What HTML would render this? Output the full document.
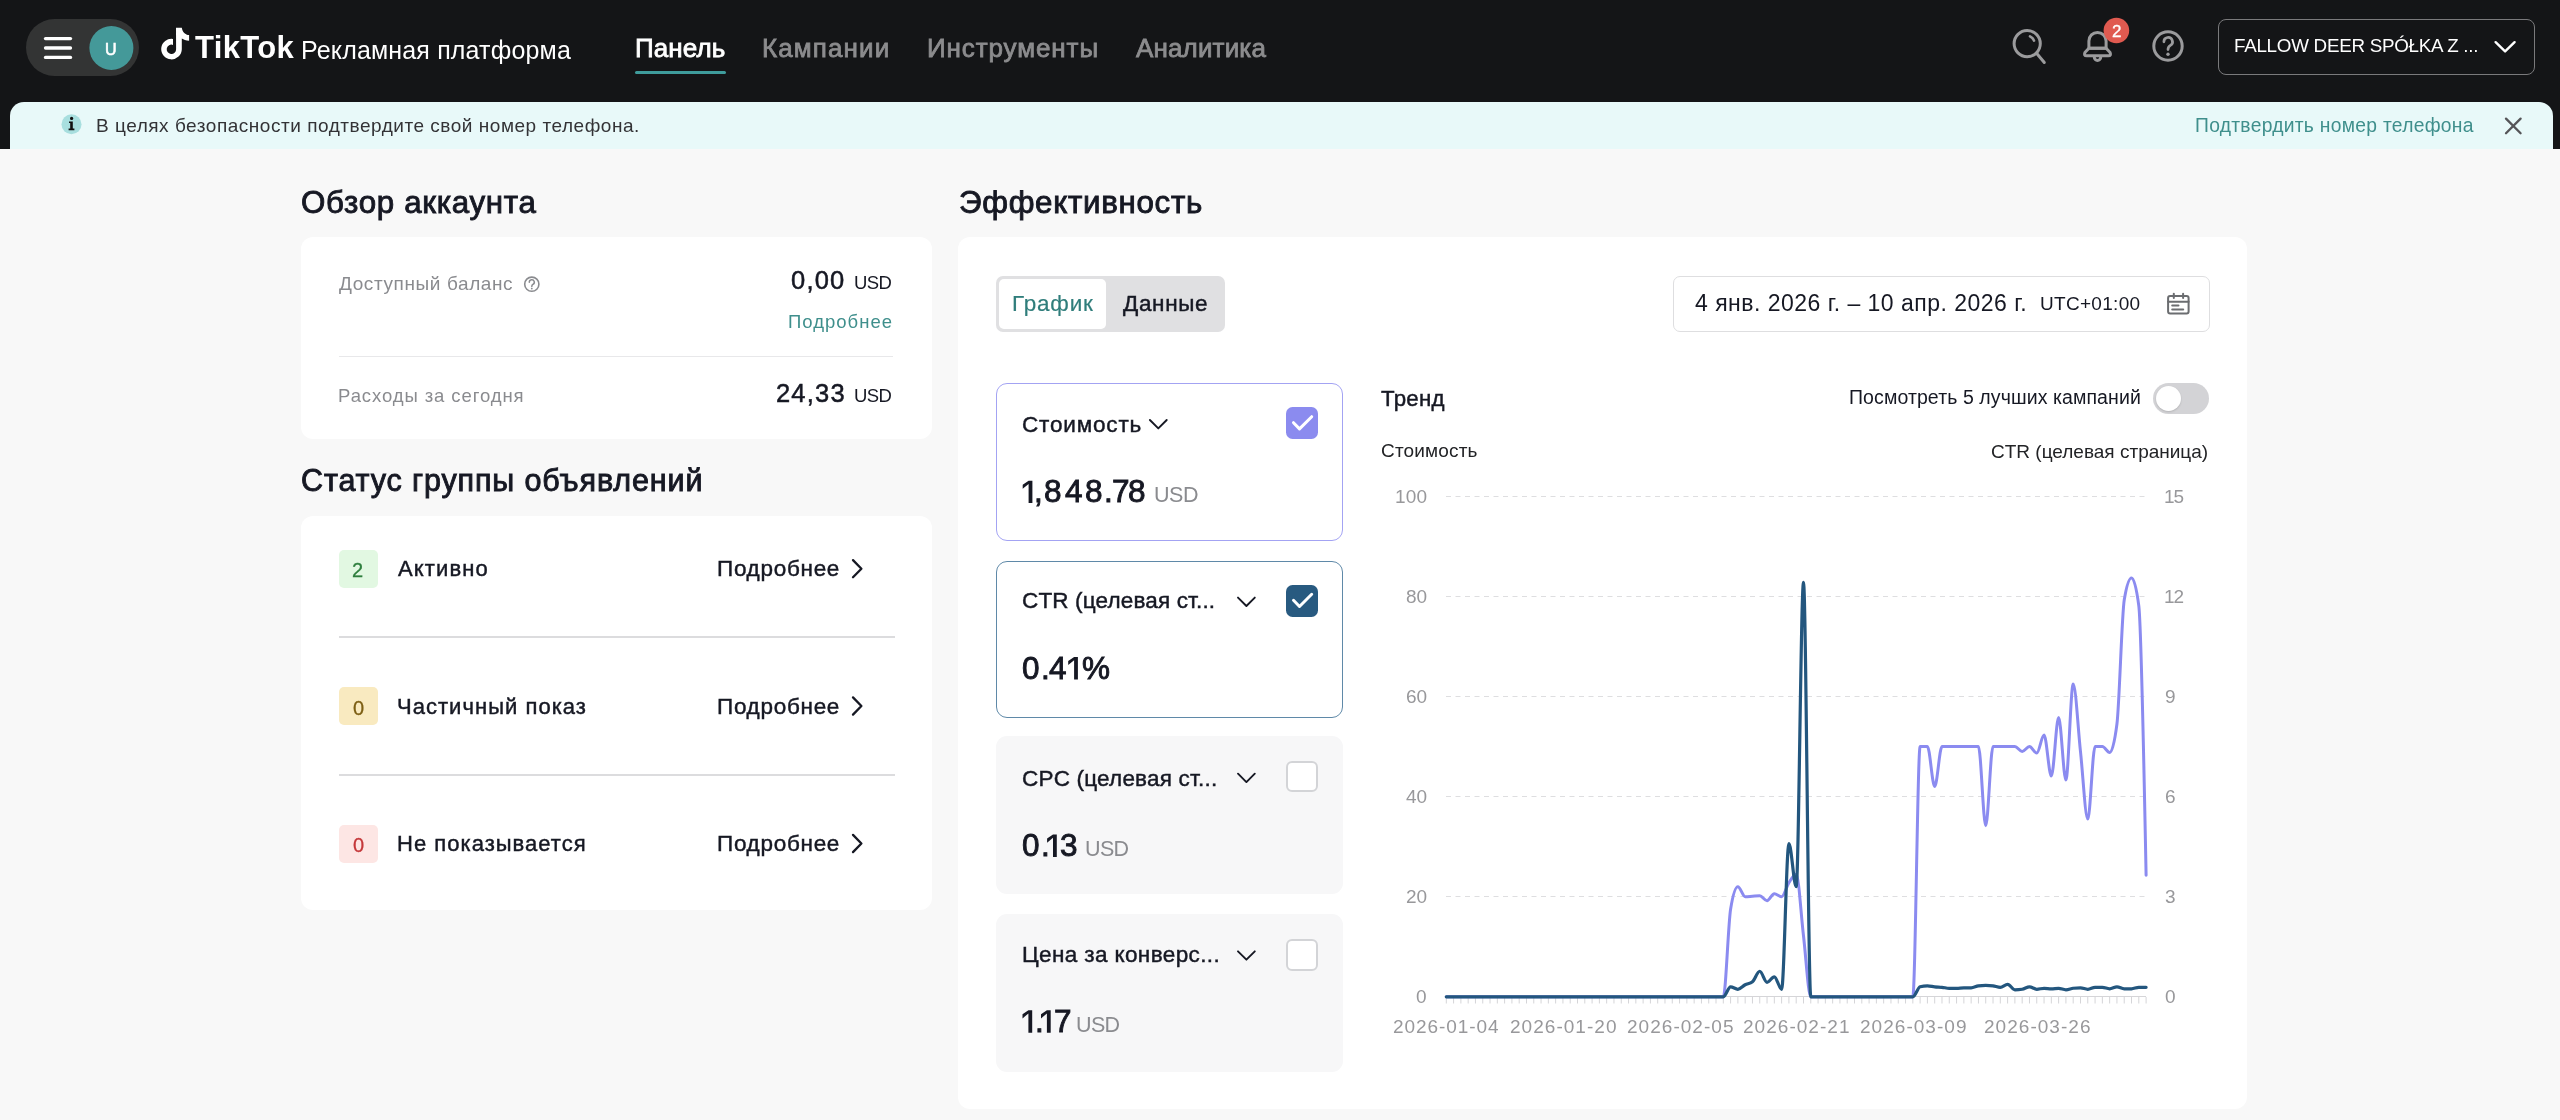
<!DOCTYPE html>
<html><head><meta charset="utf-8"><title>TikTok Ads</title>
<style>
html,body{margin:0;padding:0;width:2560px;height:1120px;overflow:hidden;background:#f8f8f8;}
body{position:relative;font-family:"Liberation Sans", sans-serif;}
.t{position:absolute;white-space:nowrap;font-family:"Liberation Sans", sans-serif;will-change:transform;}
.a{position:absolute;left:0;top:0;overflow:visible;}
</style></head><body>
<div style="position:absolute;left:0px;top:0px;width:2560px;height:149px;background:#141517;border-radius:0px;"></div>
<div style="position:absolute;left:26px;top:19px;width:113px;height:57px;background:#333434;border-radius:28.5px;"></div>
<svg class="a" width="2560" height="150" viewBox="0 0 2560 150"><g stroke="#ffffff" stroke-width="3.3" stroke-linecap="round"><line x1="45.5" y1="38.6" x2="70.5" y2="38.6"/><line x1="45.5" y1="48" x2="70.5" y2="48"/><line x1="45.5" y1="57.4" x2="70.5" y2="57.4"/></g><circle cx="111.4" cy="48" r="22" fill="#449999"/><path fill="#ffffff" d="M176,27.8 H181.8 C182.4,32 185.4,35 189.1,35.1 V40.7 C186,40.7 183.6,39.8 181.8,38.6 V49.2 A10.3,10.3 0 1 1 173,38.9 V44.9 A4.7,4.7 0 1 0 176.1,49.2 Z"/><g fill="none" stroke="#9b9b9d" stroke-width="3" stroke-linecap="round" stroke-linejoin="round"><circle cx="2027.2" cy="43.6" r="13.1"/><line x1="2037.2" y1="54" x2="2044.3" y2="62.5"/><path d="M2030 36.3 A8 8 0 0 1 2034 40.6" stroke-width="2.6"/><path d="M2088.9,48.3 V41 A8.6,8.6 0 0 1 2106.1,41 V48.3 Z"/><path d="M2088.9,48.3 L2084.9,52.6 Q2083.6,55.8 2086.6,55.8 H2108.4 Q2111.4,55.8 2110.1,52.6 L2106.1,48.3 Z"/><path d="M2094.3,57.2 A3.2,3.2 0 0 0 2100.7,57.2"/><circle cx="2168" cy="46" r="14.2"/><path d="M2163.9,41.8 A4.3,4.3 0 1 1 2170.4,45.4 Q2168,46.9 2168,49.6" stroke-width="2.7"/></g><circle cx="2168" cy="54.3" r="1.7" fill="#9b9b9d"/><circle cx="2116.4" cy="30.5" r="12.8" fill="#e05a50"/><polyline points="2495.6,42.2 2505.1,51.4 2514.6,42.2" fill="none" stroke="#ffffff" stroke-width="2.4" stroke-linecap="round" stroke-linejoin="round"/></svg>
<div class="t" style="left:105.10px;top:41.66px;font-size:16px;line-height:16px;color:#ffffff;font-weight:400;-webkit-text-stroke:0.6px #ffffff;">U</div>
<div class="t" style="left:194.60px;top:32.36px;font-size:31px;line-height:31px;color:#ffffff;font-weight:700;letter-spacing:0.340px;">TikTok</div>
<div class="t" style="left:301.10px;top:37.59px;font-size:25px;line-height:25px;color:#ffffff;font-weight:400;letter-spacing:0.158px;">Рекламная платформа</div>
<div class="t" style="left:634.80px;top:34.59px;font-size:26px;line-height:26px;color:#ffffff;font-weight:400;letter-spacing:0.105px;-webkit-text-stroke:0.8px #ffffff;">Панель</div>
<div style="position:absolute;left:635px;top:70.5px;width:91px;height:3.5px;background:#3f9c9c;border-radius:2px;"></div>
<div class="t" style="left:762.40px;top:34.59px;font-size:26px;line-height:26px;color:#8c8c8e;font-weight:400;letter-spacing:1.114px;-webkit-text-stroke:0.8px #8c8c8e;">Кампании</div>
<div class="t" style="left:926.50px;top:34.59px;font-size:26px;line-height:26px;color:#8c8c8e;font-weight:400;letter-spacing:0.897px;-webkit-text-stroke:0.8px #8c8c8e;">Инструменты</div>
<div class="t" style="left:1136.40px;top:34.59px;font-size:26px;line-height:26px;color:#8c8c8e;font-weight:400;letter-spacing:0.146px;-webkit-text-stroke:0.8px #8c8c8e;">Аналитика</div>
<div class="t" style="left:2112.10px;top:22.61px;font-size:17px;line-height:17px;color:#ffffff;font-weight:400;-webkit-text-stroke:0.3px #ffffff;">2</div>
<div style="position:absolute;left:2218px;top:18.5px;width:317px;height:56.5px;background:transparent;border:1.6px solid #7a7a7c;box-sizing:border-box;border-radius:8px;"></div>
<div class="t" style="left:2234.20px;top:36.99px;font-size:18.8px;line-height:18.8px;color:#ffffff;font-weight:400;letter-spacing:-0.261px;">FALLOW DEER SPÓŁKA Z ...</div>
<div style="position:absolute;left:10px;top:101.5px;width:2543px;height:47.3px;background:#e8f9f9;border-radius:14px;border-bottom-left-radius:0;border-bottom-right-radius:0;"></div>
<svg class="a" width="2560" height="150" viewBox="0 0 2560 150"><circle cx="71.5" cy="124.2" r="10" fill="#a8dfdf"/><circle cx="71.6" cy="118.4" r="1.6" fill="#111"/><path d="M69,121.4 H72.8 V128.4 H74.4 V130.2 H68.6 V128.4 H70.2 V123 H69 Z" fill="#111"/><g stroke="#555558" stroke-width="2.3" stroke-linecap="round"><line x1="2506" y1="118.6" x2="2520.6" y2="133.2"/><line x1="2520.6" y1="118.6" x2="2506" y2="133.2"/></g></svg>
<div class="t" style="left:95.50px;top:115.82px;font-size:19px;line-height:19px;color:#333336;font-weight:400;letter-spacing:0.526px;">В целях безопасности подтвердите свой номер телефона.</div>
<div class="t" style="left:2194.50px;top:116.06px;font-size:19.3px;line-height:19.3px;color:#3f8f8c;font-weight:400;letter-spacing:0.274px;">Подтвердить номер телефона</div>
<div class="t" style="left:300.95px;top:187.25px;font-size:31.3px;line-height:31.3px;color:#161823;font-weight:400;letter-spacing:0.690px;-webkit-text-stroke:0.9px #161823;">Обзор аккаунта</div>
<div style="position:absolute;left:300.5px;top:237px;width:631px;height:201.5px;background:#ffffff;border-radius:12px;"></div>
<div class="t" style="left:338.90px;top:273.92px;font-size:19px;line-height:19px;color:#8a8b8f;font-weight:400;letter-spacing:0.603px;">Доступный баланс</div>
<svg class="a" width="2560" height="1120" viewBox="0 0 2560 1120"><circle cx="531.8" cy="284.2" r="7.1" fill="none" stroke="#8a8b8f" stroke-width="1.6"/><path d="M529.3,282.2 A2.5,2.5 0 1 1 532.9,284.4 Q531.8,285.1 531.8,286.4" fill="none" stroke="#8a8b8f" stroke-width="1.5" stroke-linecap="round"/><circle cx="531.8" cy="288.6" r="0.9" fill="#8a8b8f"/></svg>
<div class="t" style="left:790.95px;top:268.41px;font-size:25.5px;line-height:25.5px;color:#161823;font-weight:400;letter-spacing:1.217px;-webkit-text-stroke:0.5px #161823;">0,00</div>
<div class="t" style="left:854.40px;top:274.34px;font-size:18.5px;line-height:18.5px;color:#161823;font-weight:400;letter-spacing:-0.550px;">USD</div>
<div class="t" style="left:788.30px;top:312.94px;font-size:18.5px;line-height:18.5px;color:#3f8f8c;font-weight:400;letter-spacing:1.006px;">Подробнее</div>
<div style="position:absolute;left:339px;top:355.5px;width:554px;height:1.6px;background:#e8e8ea;border-radius:0px;"></div>
<div class="t" style="left:338.40px;top:387.24px;font-size:18.5px;line-height:18.5px;color:#8a8b8f;font-weight:400;letter-spacing:0.906px;">Расходы за сегодня</div>
<div class="t" style="left:775.65px;top:381.31px;font-size:25.5px;line-height:25.5px;color:#161823;font-weight:400;letter-spacing:1.192px;-webkit-text-stroke:0.5px #161823;">24,33</div>
<div class="t" style="left:854.40px;top:387.24px;font-size:18.5px;line-height:18.5px;color:#161823;font-weight:400;letter-spacing:-0.550px;">USD</div>
<div class="t" style="left:300.85px;top:465.28px;font-size:30.5px;line-height:30.5px;color:#161823;font-weight:400;letter-spacing:0.867px;-webkit-text-stroke:0.9px #161823;">Статус группы объявлений</div>
<div style="position:absolute;left:300.5px;top:515.5px;width:631.5px;height:394.5px;background:#ffffff;border-radius:12px;"></div>
<div style="position:absolute;left:339px;top:550px;width:39px;height:38px;background:#e2f8e2;border-radius:5px;"></div>
<div class="t" style="left:352.20px;top:559.67px;font-size:20px;line-height:20px;color:#2f7f3e;font-weight:400;-webkit-text-stroke:0.3px #2f7f3e;">2</div>
<div class="t" style="left:397.73px;top:557.98px;font-size:22px;line-height:22px;color:#161823;font-weight:400;letter-spacing:1.117px;-webkit-text-stroke:0.45px #161823;">Активно</div>
<div class="t" style="left:717.23px;top:557.95px;font-size:22.5px;line-height:22.5px;color:#161823;font-weight:400;letter-spacing:0.710px;-webkit-text-stroke:0.45px #161823;">Подробнее</div>
<svg class="a" width="2560" height="1120" viewBox="0 0 2560 1120"><polyline points="853,560.1 861.4,568.7 853,577.3000000000001" fill="none" stroke="#161823" stroke-width="2.3" stroke-linecap="round" stroke-linejoin="round"/></svg>
<div style="position:absolute;left:339px;top:687px;width:39px;height:38px;background:#f9eac0;border-radius:5px;"></div>
<div class="t" style="left:352.70px;top:697.67px;font-size:20px;line-height:20px;color:#7d5f14;font-weight:400;-webkit-text-stroke:0.3px #7d5f14;">0</div>
<div class="t" style="left:396.73px;top:695.98px;font-size:22px;line-height:22px;color:#161823;font-weight:400;letter-spacing:1.037px;-webkit-text-stroke:0.45px #161823;">Частичный показ</div>
<div class="t" style="left:717.23px;top:695.95px;font-size:22.5px;line-height:22.5px;color:#161823;font-weight:400;letter-spacing:0.710px;-webkit-text-stroke:0.45px #161823;">Подробнее</div>
<svg class="a" width="2560" height="1120" viewBox="0 0 2560 1120"><polyline points="853,697.4 861.4,706 853,714.6" fill="none" stroke="#161823" stroke-width="2.3" stroke-linecap="round" stroke-linejoin="round"/></svg>
<div style="position:absolute;left:339px;top:825px;width:39px;height:38px;background:#fde6e4;border-radius:5px;"></div>
<div class="t" style="left:352.70px;top:835.07px;font-size:20px;line-height:20px;color:#c4383a;font-weight:400;-webkit-text-stroke:0.3px #c4383a;">0</div>
<div class="t" style="left:396.73px;top:833.38px;font-size:22px;line-height:22px;color:#161823;font-weight:400;letter-spacing:1.026px;-webkit-text-stroke:0.45px #161823;">Не показывается</div>
<div class="t" style="left:717.23px;top:833.35px;font-size:22.5px;line-height:22.5px;color:#161823;font-weight:400;letter-spacing:0.710px;-webkit-text-stroke:0.45px #161823;">Подробнее</div>
<svg class="a" width="2560" height="1120" viewBox="0 0 2560 1120"><polyline points="853,834.9 861.4,843.5 853,852.1" fill="none" stroke="#161823" stroke-width="2.3" stroke-linecap="round" stroke-linejoin="round"/></svg>
<div style="position:absolute;left:339px;top:636px;width:556px;height:2px;background:#dcdcde;border-radius:0px;"></div>
<div style="position:absolute;left:339px;top:774px;width:556px;height:2px;background:#dcdcde;border-radius:0px;"></div>
<div class="t" style="left:958.55px;top:186.80px;font-size:31.3px;line-height:31.3px;color:#161823;font-weight:400;letter-spacing:0.703px;-webkit-text-stroke:0.9px #161823;">Эффективность</div>
<div style="position:absolute;left:957.5px;top:237px;width:1289.7px;height:872.3px;background:#ffffff;border-radius:12px;"></div>
<div style="position:absolute;left:995.5px;top:275.8px;width:229.3px;height:56px;background:#e0e0e2;border-radius:7px;"></div>
<div style="position:absolute;left:999px;top:278.5px;width:107px;height:50.8px;background:#ffffff;border-radius:5px;"></div>
<div class="t" style="left:1011.60px;top:292.95px;font-size:22.5px;line-height:22.5px;color:#2f7d7b;font-weight:400;letter-spacing:0.794px;-webkit-text-stroke:0.2px #2f7d7b;">График</div>
<div class="t" style="left:1123.02px;top:292.95px;font-size:22.5px;line-height:22.5px;color:#161823;font-weight:400;letter-spacing:0.655px;-webkit-text-stroke:0.45px #161823;">Данные</div>
<div style="position:absolute;left:1672.5px;top:275.5px;width:537.5px;height:56px;background:#ffffff;border:1.3px solid #dedee0;box-sizing:border-box;border-radius:7px;"></div>
<div class="t" style="left:1694.70px;top:292.43px;font-size:23px;line-height:23px;color:#161823;font-weight:400;letter-spacing:0.479px;">4 янв. 2026 г. – 10 апр. 2026 г.</div>
<div class="t" style="left:2039.80px;top:293.92px;font-size:19px;line-height:19px;color:#161823;font-weight:400;letter-spacing:0.297px;">UTC+01:00</div>
<svg class="a" width="2560" height="1120" viewBox="0 0 2560 1120"><g fill="none" stroke="#6b6d70" stroke-width="2" stroke-linecap="round"><rect x="2168.1" y="296" width="20.5" height="17.6" rx="2"/><line x1="2168.1" y1="301.8" x2="2188.6" y2="301.8"/><line x1="2173.8" y1="293.8" x2="2173.8" y2="298"/><line x1="2183.1" y1="293.8" x2="2183.1" y2="298"/><line x1="2172.2" y1="305.6" x2="2178.5" y2="305.6"/><line x1="2172.2" y1="309.6" x2="2183.2" y2="309.6"/></g></svg>
<div style="position:absolute;left:995.5px;top:382.5px;width:347px;height:158px;background:#ffffff;border:1.8px solid #a3a3f3;box-sizing:border-box;border-radius:11px;"></div>
<div class="t" style="left:1022.12px;top:414.05px;font-size:22.5px;line-height:22.5px;color:#161823;font-weight:400;letter-spacing:0.829px;-webkit-text-stroke:0.45px #161823;">Стоимость</div>
<svg class="a" width="2560" height="1120" viewBox="0 0 2560 1120"><polyline points="1149.8999999999999,420.0 1158.3,428.4 1166.7,420.0" fill="none" stroke="#161823" stroke-width="1.9" stroke-linecap="round" stroke-linejoin="round"/></svg>
<div style="position:absolute;left:1286px;top:407.0px;width:32px;height:32px;background:#8b8bef;border-radius:6.5px;"></div>
<svg class="a" width="2560" height="1120" viewBox="0 0 2560 1120"><polyline points="1293.5,422.7 1299.5,428.9 1311.7,416.7" fill="none" stroke="#ffffff" stroke-width="3" stroke-linecap="round" stroke-linejoin="round"/></svg>
<svg class="a" width="2560" height="1120" viewBox="0 0 2560 1120"><path d="M1028.60,480.70 L1032.40,480.70 L1032.40,503.10 L1028.60,503.10 L1028.60,483.90 L1022.70,488.80 L1022.70,484.70 Z" fill="#161823"/></svg>
<div class="t" style="left:1034.25px;top:476.44px;font-size:31.5px;line-height:31.5px;color:#161823;font-weight:400;-webkit-text-stroke:0.9px #161823;">,</div>
<div class="t" style="left:1044.25px;top:476.44px;font-size:31.5px;line-height:31.5px;color:#161823;font-weight:400;-webkit-text-stroke:0.9px #161823;">8</div>
<div class="t" style="left:1064.95px;top:476.44px;font-size:31.5px;line-height:31.5px;color:#161823;font-weight:400;-webkit-text-stroke:0.9px #161823;">4</div>
<div class="t" style="left:1084.75px;top:476.44px;font-size:31.5px;line-height:31.5px;color:#161823;font-weight:400;-webkit-text-stroke:0.9px #161823;">8</div>
<div class="t" style="left:1103.95px;top:476.44px;font-size:31.5px;line-height:31.5px;color:#161823;font-weight:400;-webkit-text-stroke:0.9px #161823;">.</div>
<div class="t" style="left:1111.75px;top:476.44px;font-size:31.5px;line-height:31.5px;color:#161823;font-weight:400;-webkit-text-stroke:0.9px #161823;">7</div>
<div class="t" style="left:1128.45px;top:476.44px;font-size:31.5px;line-height:31.5px;color:#161823;font-weight:400;-webkit-text-stroke:0.9px #161823;">8</div>
<div class="t" style="left:1153.80px;top:484.90px;font-size:21.5px;line-height:21.5px;color:#8a8b8f;font-weight:400;letter-spacing:-0.433px;">USD</div>
<div style="position:absolute;left:995.5px;top:560.5px;width:347px;height:157px;background:#ffffff;border:1.8px solid #5f89a8;box-sizing:border-box;border-radius:11px;"></div>
<div class="t" style="left:1022.12px;top:590.45px;font-size:22.5px;line-height:22.5px;color:#161823;font-weight:400;letter-spacing:0.153px;-webkit-text-stroke:0.45px #161823;">CTR (целевая ст...</div>
<svg class="a" width="2560" height="1120" viewBox="0 0 2560 1120"><polyline points="1238.0,597.5999999999999 1246.4,606.0 1254.8000000000002,597.5999999999999" fill="none" stroke="#161823" stroke-width="1.9" stroke-linecap="round" stroke-linejoin="round"/></svg>
<div style="position:absolute;left:1286px;top:584.6px;width:32px;height:32px;background:#285a80;border-radius:6.5px;"></div>
<svg class="a" width="2560" height="1120" viewBox="0 0 2560 1120"><polyline points="1293.5,600.3000000000001 1299.5,606.5 1311.7,594.3000000000001" fill="none" stroke="#ffffff" stroke-width="3" stroke-linecap="round" stroke-linejoin="round"/></svg>
<div class="t" style="left:1022.25px;top:652.74px;font-size:31.5px;line-height:31.5px;color:#161823;font-weight:400;-webkit-text-stroke:0.9px #161823;">0</div>
<div class="t" style="left:1041.35px;top:652.74px;font-size:31.5px;line-height:31.5px;color:#161823;font-weight:400;-webkit-text-stroke:0.9px #161823;">.</div>
<div class="t" style="left:1049.15px;top:652.74px;font-size:31.5px;line-height:31.5px;color:#161823;font-weight:400;-webkit-text-stroke:0.9px #161823;">4</div>
<svg class="a" width="2560" height="1120" viewBox="0 0 2560 1120"><path d="M1074.10,657.00 L1077.90,657.00 L1077.90,679.40 L1074.10,679.40 L1074.10,660.20 L1068.20,665.10 L1068.20,661.00 Z" fill="#161823"/></svg>
<div class="t" style="left:1081.95px;top:652.74px;font-size:31.5px;line-height:31.5px;color:#161823;font-weight:400;-webkit-text-stroke:0.9px #161823;">%</div>
<div style="position:absolute;left:995.5px;top:736.3px;width:347px;height:157.5px;background:#f7f7f8;border-radius:11px;"></div>
<div class="t" style="left:1022.12px;top:767.95px;font-size:22.5px;line-height:22.5px;color:#161823;font-weight:400;letter-spacing:0.203px;-webkit-text-stroke:0.45px #161823;">CPC (целевая ст...</div>
<svg class="a" width="2560" height="1120" viewBox="0 0 2560 1120"><polyline points="1238.0,773.6999999999999 1246.4,782.1 1254.8000000000002,773.6999999999999" fill="none" stroke="#161823" stroke-width="1.9" stroke-linecap="round" stroke-linejoin="round"/></svg>
<div style="position:absolute;left:1286px;top:760.9px;width:32px;height:31.5px;background:#ffffff;border:2.7px solid #d3d4d7;box-sizing:border-box;border-radius:6px;"></div>
<div class="t" style="left:1022.45px;top:830.34px;font-size:31.5px;line-height:31.5px;color:#161823;font-weight:400;-webkit-text-stroke:0.9px #161823;">0</div>
<div class="t" style="left:1041.15px;top:830.34px;font-size:31.5px;line-height:31.5px;color:#161823;font-weight:400;-webkit-text-stroke:0.9px #161823;">.</div>
<svg class="a" width="2560" height="1120" viewBox="0 0 2560 1120"><path d="M1053.00,834.60 L1056.80,834.60 L1056.80,857.00 L1053.00,857.00 L1053.00,837.80 L1047.10,842.70 L1047.10,838.60 Z" fill="#161823"/></svg>
<div class="t" style="left:1059.95px;top:830.34px;font-size:31.5px;line-height:31.5px;color:#161823;font-weight:400;-webkit-text-stroke:0.9px #161823;">3</div>
<div class="t" style="left:1085.30px;top:838.80px;font-size:21.5px;line-height:21.5px;color:#8a8b8f;font-weight:400;letter-spacing:-0.633px;">USD</div>
<div style="position:absolute;left:995.5px;top:914px;width:347px;height:157.5px;background:#f7f7f8;border-radius:11px;"></div>
<div class="t" style="left:1022.12px;top:943.75px;font-size:22.5px;line-height:22.5px;color:#161823;font-weight:400;letter-spacing:0.383px;-webkit-text-stroke:0.45px #161823;">Цена за конверс...</div>
<svg class="a" width="2560" height="1120" viewBox="0 0 2560 1120"><polyline points="1238.0,951.3 1246.4,959.7 1254.8000000000002,951.3" fill="none" stroke="#161823" stroke-width="1.9" stroke-linecap="round" stroke-linejoin="round"/></svg>
<div style="position:absolute;left:1286px;top:939.4px;width:32px;height:31.5px;background:#ffffff;border:2.7px solid #d3d4d7;box-sizing:border-box;border-radius:6px;"></div>
<svg class="a" width="2560" height="1120" viewBox="0 0 2560 1120"><path d="M1028.40,1010.30 L1032.20,1010.30 L1032.20,1032.70 L1028.40,1032.70 L1028.40,1013.50 L1022.50,1018.40 L1022.50,1014.30 Z" fill="#161823"/></svg>
<div class="t" style="left:1035.25px;top:1006.04px;font-size:31.5px;line-height:31.5px;color:#161823;font-weight:400;-webkit-text-stroke:0.9px #161823;">.</div>
<svg class="a" width="2560" height="1120" viewBox="0 0 2560 1120"><path d="M1046.90,1010.30 L1050.70,1010.30 L1050.70,1032.70 L1046.90,1032.70 L1046.90,1013.50 L1041.00,1018.40 L1041.00,1014.30 Z" fill="#161823"/></svg>
<div class="t" style="left:1053.85px;top:1006.04px;font-size:31.5px;line-height:31.5px;color:#161823;font-weight:400;-webkit-text-stroke:0.9px #161823;">7</div>
<div class="t" style="left:1076.40px;top:1014.50px;font-size:21.5px;line-height:21.5px;color:#8a8b8f;font-weight:400;letter-spacing:-0.633px;">USD</div>
<div class="t" style="left:1381.22px;top:387.62px;font-size:22.3px;line-height:22.3px;color:#161823;font-weight:400;letter-spacing:0.267px;-webkit-text-stroke:0.45px #161823;">Тренд</div>
<div class="t" style="left:1848.50px;top:388.49px;font-size:19.5px;line-height:19.5px;color:#161823;font-weight:400;letter-spacing:0.091px;">Посмотреть 5 лучших кампаний</div>
<div style="position:absolute;left:2152.7px;top:382.7px;width:56.5px;height:31.5px;background:#d3d3d6;border-radius:16px;"></div>
<div style="position:absolute;left:2155.5px;top:386.2px;width:25px;height:25px;background:#ffffff;border-radius:12.5px;box-shadow:0 1px 2px rgba(0,0,0,0.15);"></div>
<div class="t" style="left:1380.60px;top:441.42px;font-size:19px;line-height:19px;color:#222326;font-weight:400;letter-spacing:0.172px;">Стоимость</div>
<div class="t" style="left:1991.20px;top:441.52px;font-size:19px;line-height:19px;color:#222326;font-weight:400;">CTR (целевая страница)</div>
<div class="t" style="left:1394.70px;top:486.67px;font-size:19px;line-height:19px;color:#98989b;font-weight:400;letter-spacing:0.233px;">100</div>
<div class="t" style="left:1405.73px;top:586.67px;font-size:19px;line-height:19px;color:#98989b;font-weight:400;">80</div>
<div class="t" style="left:1405.73px;top:686.67px;font-size:19px;line-height:19px;color:#98989b;font-weight:400;">60</div>
<div class="t" style="left:1405.73px;top:786.67px;font-size:19px;line-height:19px;color:#98989b;font-weight:400;">40</div>
<div class="t" style="left:1405.73px;top:886.67px;font-size:19px;line-height:19px;color:#98989b;font-weight:400;">20</div>
<div class="t" style="left:1416.30px;top:986.67px;font-size:19px;line-height:19px;color:#98989b;font-weight:400;">0</div>
<div class="t" style="left:2163.75px;top:486.67px;font-size:19px;line-height:19px;color:#98989b;font-weight:400;letter-spacing:-1.167px;">15</div>
<div class="t" style="left:2163.75px;top:586.67px;font-size:19px;line-height:19px;color:#98989b;font-weight:400;letter-spacing:-1.167px;">12</div>
<div class="t" style="left:2164.75px;top:686.67px;font-size:19px;line-height:19px;color:#98989b;font-weight:400;">9</div>
<div class="t" style="left:2164.75px;top:786.67px;font-size:19px;line-height:19px;color:#98989b;font-weight:400;">6</div>
<div class="t" style="left:2164.75px;top:886.67px;font-size:19px;line-height:19px;color:#98989b;font-weight:400;">3</div>
<div class="t" style="left:2164.75px;top:986.67px;font-size:19px;line-height:19px;color:#98989b;font-weight:400;">0</div>
<div class="t" style="left:1393.35px;top:1016.82px;font-size:19px;line-height:19px;color:#98989b;font-weight:400;letter-spacing:0.920px;">2026-01-04</div>
<div class="t" style="left:1510.02px;top:1016.82px;font-size:19px;line-height:19px;color:#98989b;font-weight:400;letter-spacing:1.031px;">2026-01-20</div>
<div class="t" style="left:1626.68px;top:1016.82px;font-size:19px;line-height:19px;color:#98989b;font-weight:400;letter-spacing:1.031px;">2026-02-05</div>
<div class="t" style="left:1743.35px;top:1016.82px;font-size:19px;line-height:19px;color:#98989b;font-weight:400;letter-spacing:1.031px;">2026-02-21</div>
<div class="t" style="left:1860.02px;top:1016.82px;font-size:19px;line-height:19px;color:#98989b;font-weight:400;letter-spacing:1.031px;">2026-03-09</div>
<div class="t" style="left:1983.97px;top:1016.82px;font-size:19px;line-height:19px;color:#98989b;font-weight:400;letter-spacing:1.031px;">2026-03-26</div>
<svg class="a" width="2560" height="1120" viewBox="0 0 2560 1120"><line x1="1446" y1="496.5" x2="2146" y2="496.5" stroke="#dedee0" stroke-width="1" stroke-dasharray="5 4.5"/><line x1="1446" y1="596.5" x2="2146" y2="596.5" stroke="#dedee0" stroke-width="1" stroke-dasharray="5 4.5"/><line x1="1446" y1="696.5" x2="2146" y2="696.5" stroke="#dedee0" stroke-width="1" stroke-dasharray="5 4.5"/><line x1="1446" y1="796.5" x2="2146" y2="796.5" stroke="#dedee0" stroke-width="1" stroke-dasharray="5 4.5"/><line x1="1446" y1="896.5" x2="2146" y2="896.5" stroke="#dedee0" stroke-width="1" stroke-dasharray="5 4.5"/><line x1="1446" y1="996.5" x2="2146" y2="996.5" stroke="#d5d5d8" stroke-width="1"/><line x1="1446.30" y1="997" x2="1446.30" y2="1003.5" stroke="#d5d5d8" stroke-width="1"/><line x1="1453.59" y1="997" x2="1453.59" y2="1003.5" stroke="#d5d5d8" stroke-width="1"/><line x1="1460.88" y1="997" x2="1460.88" y2="1003.5" stroke="#d5d5d8" stroke-width="1"/><line x1="1468.17" y1="997" x2="1468.17" y2="1003.5" stroke="#d5d5d8" stroke-width="1"/><line x1="1475.46" y1="997" x2="1475.46" y2="1003.5" stroke="#d5d5d8" stroke-width="1"/><line x1="1482.75" y1="997" x2="1482.75" y2="1003.5" stroke="#d5d5d8" stroke-width="1"/><line x1="1490.04" y1="997" x2="1490.04" y2="1003.5" stroke="#d5d5d8" stroke-width="1"/><line x1="1497.33" y1="997" x2="1497.33" y2="1003.5" stroke="#d5d5d8" stroke-width="1"/><line x1="1504.62" y1="997" x2="1504.62" y2="1003.5" stroke="#d5d5d8" stroke-width="1"/><line x1="1511.91" y1="997" x2="1511.91" y2="1003.5" stroke="#d5d5d8" stroke-width="1"/><line x1="1519.20" y1="997" x2="1519.20" y2="1003.5" stroke="#d5d5d8" stroke-width="1"/><line x1="1526.49" y1="997" x2="1526.49" y2="1003.5" stroke="#d5d5d8" stroke-width="1"/><line x1="1533.77" y1="997" x2="1533.77" y2="1003.5" stroke="#d5d5d8" stroke-width="1"/><line x1="1541.06" y1="997" x2="1541.06" y2="1003.5" stroke="#d5d5d8" stroke-width="1"/><line x1="1548.35" y1="997" x2="1548.35" y2="1003.5" stroke="#d5d5d8" stroke-width="1"/><line x1="1555.64" y1="997" x2="1555.64" y2="1003.5" stroke="#d5d5d8" stroke-width="1"/><line x1="1562.93" y1="997" x2="1562.93" y2="1003.5" stroke="#d5d5d8" stroke-width="1"/><line x1="1570.22" y1="997" x2="1570.22" y2="1003.5" stroke="#d5d5d8" stroke-width="1"/><line x1="1577.51" y1="997" x2="1577.51" y2="1003.5" stroke="#d5d5d8" stroke-width="1"/><line x1="1584.80" y1="997" x2="1584.80" y2="1003.5" stroke="#d5d5d8" stroke-width="1"/><line x1="1592.09" y1="997" x2="1592.09" y2="1003.5" stroke="#d5d5d8" stroke-width="1"/><line x1="1599.38" y1="997" x2="1599.38" y2="1003.5" stroke="#d5d5d8" stroke-width="1"/><line x1="1606.67" y1="997" x2="1606.67" y2="1003.5" stroke="#d5d5d8" stroke-width="1"/><line x1="1613.96" y1="997" x2="1613.96" y2="1003.5" stroke="#d5d5d8" stroke-width="1"/><line x1="1621.25" y1="997" x2="1621.25" y2="1003.5" stroke="#d5d5d8" stroke-width="1"/><line x1="1628.54" y1="997" x2="1628.54" y2="1003.5" stroke="#d5d5d8" stroke-width="1"/><line x1="1635.83" y1="997" x2="1635.83" y2="1003.5" stroke="#d5d5d8" stroke-width="1"/><line x1="1643.12" y1="997" x2="1643.12" y2="1003.5" stroke="#d5d5d8" stroke-width="1"/><line x1="1650.41" y1="997" x2="1650.41" y2="1003.5" stroke="#d5d5d8" stroke-width="1"/><line x1="1657.70" y1="997" x2="1657.70" y2="1003.5" stroke="#d5d5d8" stroke-width="1"/><line x1="1664.99" y1="997" x2="1664.99" y2="1003.5" stroke="#d5d5d8" stroke-width="1"/><line x1="1672.28" y1="997" x2="1672.28" y2="1003.5" stroke="#d5d5d8" stroke-width="1"/><line x1="1679.57" y1="997" x2="1679.57" y2="1003.5" stroke="#d5d5d8" stroke-width="1"/><line x1="1686.86" y1="997" x2="1686.86" y2="1003.5" stroke="#d5d5d8" stroke-width="1"/><line x1="1694.15" y1="997" x2="1694.15" y2="1003.5" stroke="#d5d5d8" stroke-width="1"/><line x1="1701.44" y1="997" x2="1701.44" y2="1003.5" stroke="#d5d5d8" stroke-width="1"/><line x1="1708.72" y1="997" x2="1708.72" y2="1003.5" stroke="#d5d5d8" stroke-width="1"/><line x1="1716.01" y1="997" x2="1716.01" y2="1003.5" stroke="#d5d5d8" stroke-width="1"/><line x1="1723.30" y1="997" x2="1723.30" y2="1003.5" stroke="#d5d5d8" stroke-width="1"/><line x1="1730.59" y1="997" x2="1730.59" y2="1003.5" stroke="#d5d5d8" stroke-width="1"/><line x1="1737.88" y1="997" x2="1737.88" y2="1003.5" stroke="#d5d5d8" stroke-width="1"/><line x1="1745.17" y1="997" x2="1745.17" y2="1003.5" stroke="#d5d5d8" stroke-width="1"/><line x1="1752.46" y1="997" x2="1752.46" y2="1003.5" stroke="#d5d5d8" stroke-width="1"/><line x1="1759.75" y1="997" x2="1759.75" y2="1003.5" stroke="#d5d5d8" stroke-width="1"/><line x1="1767.04" y1="997" x2="1767.04" y2="1003.5" stroke="#d5d5d8" stroke-width="1"/><line x1="1774.33" y1="997" x2="1774.33" y2="1003.5" stroke="#d5d5d8" stroke-width="1"/><line x1="1781.62" y1="997" x2="1781.62" y2="1003.5" stroke="#d5d5d8" stroke-width="1"/><line x1="1788.91" y1="997" x2="1788.91" y2="1003.5" stroke="#d5d5d8" stroke-width="1"/><line x1="1796.20" y1="997" x2="1796.20" y2="1003.5" stroke="#d5d5d8" stroke-width="1"/><line x1="1803.49" y1="997" x2="1803.49" y2="1003.5" stroke="#d5d5d8" stroke-width="1"/><line x1="1810.78" y1="997" x2="1810.78" y2="1003.5" stroke="#d5d5d8" stroke-width="1"/><line x1="1818.07" y1="997" x2="1818.07" y2="1003.5" stroke="#d5d5d8" stroke-width="1"/><line x1="1825.36" y1="997" x2="1825.36" y2="1003.5" stroke="#d5d5d8" stroke-width="1"/><line x1="1832.65" y1="997" x2="1832.65" y2="1003.5" stroke="#d5d5d8" stroke-width="1"/><line x1="1839.94" y1="997" x2="1839.94" y2="1003.5" stroke="#d5d5d8" stroke-width="1"/><line x1="1847.23" y1="997" x2="1847.23" y2="1003.5" stroke="#d5d5d8" stroke-width="1"/><line x1="1854.52" y1="997" x2="1854.52" y2="1003.5" stroke="#d5d5d8" stroke-width="1"/><line x1="1861.81" y1="997" x2="1861.81" y2="1003.5" stroke="#d5d5d8" stroke-width="1"/><line x1="1869.10" y1="997" x2="1869.10" y2="1003.5" stroke="#d5d5d8" stroke-width="1"/><line x1="1876.39" y1="997" x2="1876.39" y2="1003.5" stroke="#d5d5d8" stroke-width="1"/><line x1="1883.67" y1="997" x2="1883.67" y2="1003.5" stroke="#d5d5d8" stroke-width="1"/><line x1="1890.96" y1="997" x2="1890.96" y2="1003.5" stroke="#d5d5d8" stroke-width="1"/><line x1="1898.25" y1="997" x2="1898.25" y2="1003.5" stroke="#d5d5d8" stroke-width="1"/><line x1="1905.54" y1="997" x2="1905.54" y2="1003.5" stroke="#d5d5d8" stroke-width="1"/><line x1="1912.83" y1="997" x2="1912.83" y2="1003.5" stroke="#d5d5d8" stroke-width="1"/><line x1="1920.12" y1="997" x2="1920.12" y2="1003.5" stroke="#d5d5d8" stroke-width="1"/><line x1="1927.41" y1="997" x2="1927.41" y2="1003.5" stroke="#d5d5d8" stroke-width="1"/><line x1="1934.70" y1="997" x2="1934.70" y2="1003.5" stroke="#d5d5d8" stroke-width="1"/><line x1="1941.99" y1="997" x2="1941.99" y2="1003.5" stroke="#d5d5d8" stroke-width="1"/><line x1="1949.28" y1="997" x2="1949.28" y2="1003.5" stroke="#d5d5d8" stroke-width="1"/><line x1="1956.57" y1="997" x2="1956.57" y2="1003.5" stroke="#d5d5d8" stroke-width="1"/><line x1="1963.86" y1="997" x2="1963.86" y2="1003.5" stroke="#d5d5d8" stroke-width="1"/><line x1="1971.15" y1="997" x2="1971.15" y2="1003.5" stroke="#d5d5d8" stroke-width="1"/><line x1="1978.44" y1="997" x2="1978.44" y2="1003.5" stroke="#d5d5d8" stroke-width="1"/><line x1="1985.73" y1="997" x2="1985.73" y2="1003.5" stroke="#d5d5d8" stroke-width="1"/><line x1="1993.02" y1="997" x2="1993.02" y2="1003.5" stroke="#d5d5d8" stroke-width="1"/><line x1="2000.31" y1="997" x2="2000.31" y2="1003.5" stroke="#d5d5d8" stroke-width="1"/><line x1="2007.60" y1="997" x2="2007.60" y2="1003.5" stroke="#d5d5d8" stroke-width="1"/><line x1="2014.89" y1="997" x2="2014.89" y2="1003.5" stroke="#d5d5d8" stroke-width="1"/><line x1="2022.18" y1="997" x2="2022.18" y2="1003.5" stroke="#d5d5d8" stroke-width="1"/><line x1="2029.47" y1="997" x2="2029.47" y2="1003.5" stroke="#d5d5d8" stroke-width="1"/><line x1="2036.76" y1="997" x2="2036.76" y2="1003.5" stroke="#d5d5d8" stroke-width="1"/><line x1="2044.05" y1="997" x2="2044.05" y2="1003.5" stroke="#d5d5d8" stroke-width="1"/><line x1="2051.34" y1="997" x2="2051.34" y2="1003.5" stroke="#d5d5d8" stroke-width="1"/><line x1="2058.62" y1="997" x2="2058.62" y2="1003.5" stroke="#d5d5d8" stroke-width="1"/><line x1="2065.91" y1="997" x2="2065.91" y2="1003.5" stroke="#d5d5d8" stroke-width="1"/><line x1="2073.20" y1="997" x2="2073.20" y2="1003.5" stroke="#d5d5d8" stroke-width="1"/><line x1="2080.49" y1="997" x2="2080.49" y2="1003.5" stroke="#d5d5d8" stroke-width="1"/><line x1="2087.78" y1="997" x2="2087.78" y2="1003.5" stroke="#d5d5d8" stroke-width="1"/><line x1="2095.07" y1="997" x2="2095.07" y2="1003.5" stroke="#d5d5d8" stroke-width="1"/><line x1="2102.36" y1="997" x2="2102.36" y2="1003.5" stroke="#d5d5d8" stroke-width="1"/><line x1="2109.65" y1="997" x2="2109.65" y2="1003.5" stroke="#d5d5d8" stroke-width="1"/><line x1="2116.94" y1="997" x2="2116.94" y2="1003.5" stroke="#d5d5d8" stroke-width="1"/><line x1="2124.23" y1="997" x2="2124.23" y2="1003.5" stroke="#d5d5d8" stroke-width="1"/><line x1="2131.52" y1="997" x2="2131.52" y2="1003.5" stroke="#d5d5d8" stroke-width="1"/><line x1="2138.81" y1="997" x2="2138.81" y2="1003.5" stroke="#d5d5d8" stroke-width="1"/><line x1="2146.10" y1="997" x2="2146.10" y2="1003.5" stroke="#d5d5d8" stroke-width="1"/><path d="M1446.30,996.80 C1448.73,996.80 1451.16,996.80 1453.59,996.80 C1456.02,996.80 1458.45,996.80 1460.88,996.80 C1463.31,996.80 1465.74,996.80 1468.17,996.80 C1470.60,996.80 1473.03,996.80 1475.46,996.80 C1477.89,996.80 1480.32,996.80 1482.75,996.80 C1485.18,996.80 1487.61,996.80 1490.04,996.80 C1492.47,996.80 1494.90,996.80 1497.33,996.80 C1499.76,996.80 1502.19,996.80 1504.62,996.80 C1507.05,996.80 1509.48,996.80 1511.91,996.80 C1514.34,996.80 1516.77,996.80 1519.20,996.80 C1521.63,996.80 1524.06,996.80 1526.49,996.80 C1528.92,996.80 1531.35,996.80 1533.77,996.80 C1536.20,996.80 1538.63,996.80 1541.06,996.80 C1543.49,996.80 1545.92,996.80 1548.35,996.80 C1550.78,996.80 1553.21,996.80 1555.64,996.80 C1558.07,996.80 1560.50,996.80 1562.93,996.80 C1565.36,996.80 1567.79,996.80 1570.22,996.80 C1572.65,996.80 1575.08,996.80 1577.51,996.80 C1579.94,996.80 1582.37,996.80 1584.80,996.80 C1587.23,996.80 1589.66,996.80 1592.09,996.80 C1594.52,996.80 1596.95,996.80 1599.38,996.80 C1601.81,996.80 1604.24,996.80 1606.67,996.80 C1609.10,996.80 1611.53,996.80 1613.96,996.80 C1616.39,996.80 1618.82,996.80 1621.25,996.80 C1623.68,996.80 1626.11,996.80 1628.54,996.80 C1630.97,996.80 1633.40,996.80 1635.83,996.80 C1638.26,996.80 1640.69,996.80 1643.12,996.80 C1645.55,996.80 1647.98,996.80 1650.41,996.80 C1652.84,996.80 1655.27,996.80 1657.70,996.80 C1660.13,996.80 1662.56,996.80 1664.99,996.80 C1667.42,996.80 1669.85,996.80 1672.28,996.80 C1674.71,996.80 1677.14,996.80 1679.57,996.80 C1682.00,996.80 1684.43,996.80 1686.86,996.80 C1689.29,996.80 1691.72,996.80 1694.15,996.80 C1696.58,996.80 1699.01,996.80 1701.44,996.80 C1703.87,996.80 1706.30,996.80 1708.72,996.80 C1711.15,996.80 1713.58,996.80 1716.01,996.80 C1718.44,996.80 1720.87,996.80 1723.30,996.80 C1725.73,996.80 1728.16,924.23 1730.59,909.21 C1733.02,894.20 1735.45,886.69 1737.88,886.69 C1740.31,886.69 1742.74,896.70 1745.17,896.70 C1747.60,896.70 1750.03,896.37 1752.46,896.20 C1754.89,896.03 1757.32,895.70 1759.75,895.70 C1762.18,895.70 1764.61,900.70 1767.04,900.70 C1769.47,900.70 1771.90,893.70 1774.33,893.70 C1776.76,893.70 1779.19,896.70 1781.62,896.70 C1784.05,896.70 1786.48,886.44 1788.91,882.69 C1791.34,878.93 1793.77,874.18 1796.20,874.18 C1798.63,874.18 1801.06,915.30 1803.49,935.74 C1805.92,956.18 1808.35,996.80 1810.78,996.80 C1813.21,996.80 1815.64,996.80 1818.07,996.80 C1820.50,996.80 1822.93,996.80 1825.36,996.80 C1827.79,996.80 1830.22,996.80 1832.65,996.80 C1835.08,996.80 1837.51,996.80 1839.94,996.80 C1842.37,996.80 1844.80,996.80 1847.23,996.80 C1849.66,996.80 1852.09,996.80 1854.52,996.80 C1856.95,996.80 1859.38,996.80 1861.81,996.80 C1864.24,996.80 1866.67,996.80 1869.10,996.80 C1871.53,996.80 1873.96,996.80 1876.39,996.80 C1878.82,996.80 1881.25,996.80 1883.67,996.80 C1886.10,996.80 1888.53,996.80 1890.96,996.80 C1893.39,996.80 1895.82,996.80 1898.25,996.80 C1900.68,996.80 1903.11,996.80 1905.54,996.80 C1907.97,996.80 1910.40,996.80 1912.83,996.80 C1915.26,996.80 1917.69,746.55 1920.12,746.55 C1922.55,746.55 1924.98,746.55 1927.41,746.55 C1929.84,746.55 1932.27,786.59 1934.70,786.59 C1937.13,786.59 1939.56,746.55 1941.99,746.55 C1944.42,746.55 1946.85,746.55 1949.28,746.55 C1951.71,746.55 1954.14,746.55 1956.57,746.55 C1959.00,746.55 1961.43,746.55 1963.86,746.55 C1966.29,746.55 1968.72,746.55 1971.15,746.55 C1973.58,746.55 1976.01,746.55 1978.44,746.55 C1980.87,746.55 1983.30,825.63 1985.73,825.63 C1988.16,825.63 1990.59,746.55 1993.02,746.55 C1995.45,746.55 1997.88,746.55 2000.31,746.55 C2002.74,746.55 2005.17,746.55 2007.60,746.55 C2010.03,746.55 2012.46,746.55 2014.89,746.55 C2017.32,746.55 2019.75,751.55 2022.18,751.55 C2024.61,751.55 2027.04,746.55 2029.47,746.55 C2031.90,746.55 2034.33,753.06 2036.76,753.06 C2039.19,753.06 2041.62,735.04 2044.05,735.04 C2046.48,735.04 2048.91,776.08 2051.34,776.08 C2053.77,776.08 2056.20,717.52 2058.62,717.52 C2061.05,717.52 2063.48,780.08 2065.91,780.08 C2068.34,780.08 2070.77,683.99 2073.20,683.99 C2075.63,683.99 2078.06,729.03 2080.49,751.55 C2082.92,774.08 2085.35,819.12 2087.78,819.12 C2090.21,819.12 2092.64,746.55 2095.07,746.55 C2097.50,746.55 2099.93,746.55 2102.36,746.55 C2104.79,746.55 2107.22,752.56 2109.65,752.56 C2112.08,752.56 2114.51,743.05 2116.94,724.03 C2119.37,705.01 2121.80,614.58 2124.23,599.90 C2126.66,585.22 2129.09,577.88 2131.52,577.88 C2133.95,577.88 2136.38,587.22 2138.81,605.91 C2141.24,624.59 2143.67,749.89 2146.10,875.18" fill="none" stroke="#8b8bf0" stroke-width="3" stroke-linejoin="round" stroke-linecap="round"/><path d="M1446.30,996.80 C1448.73,996.80 1451.16,996.80 1453.59,996.80 C1456.02,996.80 1458.45,996.80 1460.88,996.80 C1463.31,996.80 1465.74,996.80 1468.17,996.80 C1470.60,996.80 1473.03,996.80 1475.46,996.80 C1477.89,996.80 1480.32,996.80 1482.75,996.80 C1485.18,996.80 1487.61,996.80 1490.04,996.80 C1492.47,996.80 1494.90,996.80 1497.33,996.80 C1499.76,996.80 1502.19,996.80 1504.62,996.80 C1507.05,996.80 1509.48,996.80 1511.91,996.80 C1514.34,996.80 1516.77,996.80 1519.20,996.80 C1521.63,996.80 1524.06,996.80 1526.49,996.80 C1528.92,996.80 1531.35,996.80 1533.77,996.80 C1536.20,996.80 1538.63,996.80 1541.06,996.80 C1543.49,996.80 1545.92,996.80 1548.35,996.80 C1550.78,996.80 1553.21,996.80 1555.64,996.80 C1558.07,996.80 1560.50,996.80 1562.93,996.80 C1565.36,996.80 1567.79,996.80 1570.22,996.80 C1572.65,996.80 1575.08,996.80 1577.51,996.80 C1579.94,996.80 1582.37,996.80 1584.80,996.80 C1587.23,996.80 1589.66,996.80 1592.09,996.80 C1594.52,996.80 1596.95,996.80 1599.38,996.80 C1601.81,996.80 1604.24,996.80 1606.67,996.80 C1609.10,996.80 1611.53,996.80 1613.96,996.80 C1616.39,996.80 1618.82,996.80 1621.25,996.80 C1623.68,996.80 1626.11,996.80 1628.54,996.80 C1630.97,996.80 1633.40,996.80 1635.83,996.80 C1638.26,996.80 1640.69,996.80 1643.12,996.80 C1645.55,996.80 1647.98,996.80 1650.41,996.80 C1652.84,996.80 1655.27,996.80 1657.70,996.80 C1660.13,996.80 1662.56,996.80 1664.99,996.80 C1667.42,996.80 1669.85,996.80 1672.28,996.80 C1674.71,996.80 1677.14,996.80 1679.57,996.80 C1682.00,996.80 1684.43,996.80 1686.86,996.80 C1689.29,996.80 1691.72,996.80 1694.15,996.80 C1696.58,996.80 1699.01,996.80 1701.44,996.80 C1703.87,996.80 1706.30,996.80 1708.72,996.80 C1711.15,996.80 1713.58,996.80 1716.01,996.80 C1718.44,996.80 1720.87,996.80 1723.30,996.80 C1725.73,996.80 1728.16,986.79 1730.59,986.79 C1733.02,986.79 1735.45,989.29 1737.88,989.29 C1740.31,989.29 1742.74,986.04 1745.17,984.79 C1747.60,983.54 1750.03,983.79 1752.46,981.78 C1754.89,979.78 1757.32,971.27 1759.75,971.27 C1762.18,971.27 1764.61,982.29 1767.04,982.29 C1769.47,982.29 1771.90,976.78 1774.33,976.78 C1776.76,976.78 1779.19,989.29 1781.62,989.29 C1784.05,989.29 1786.48,843.65 1788.91,843.65 C1791.34,843.65 1793.77,886.69 1796.20,886.69 C1798.63,886.69 1801.06,582.39 1803.49,582.39 C1805.92,582.39 1808.35,996.80 1810.78,996.80 C1813.21,996.80 1815.64,996.80 1818.07,996.80 C1820.50,996.80 1822.93,996.80 1825.36,996.80 C1827.79,996.80 1830.22,996.80 1832.65,996.80 C1835.08,996.80 1837.51,996.80 1839.94,996.80 C1842.37,996.80 1844.80,996.80 1847.23,996.80 C1849.66,996.80 1852.09,996.80 1854.52,996.80 C1856.95,996.80 1859.38,996.80 1861.81,996.80 C1864.24,996.80 1866.67,996.80 1869.10,996.80 C1871.53,996.80 1873.96,996.80 1876.39,996.80 C1878.82,996.80 1881.25,996.80 1883.67,996.80 C1886.10,996.80 1888.53,996.80 1890.96,996.80 C1893.39,996.80 1895.82,996.80 1898.25,996.80 C1900.68,996.80 1903.11,996.80 1905.54,996.80 C1907.97,996.80 1910.40,996.80 1912.83,996.80 C1915.26,996.80 1917.69,987.46 1920.12,986.79 C1922.55,986.12 1924.98,985.79 1927.41,985.79 C1929.84,985.79 1932.27,986.54 1934.70,986.79 C1937.13,987.04 1939.56,987.04 1941.99,987.29 C1944.42,987.54 1946.85,988.29 1949.28,988.29 C1951.71,988.29 1954.14,988.29 1956.57,988.29 C1959.00,988.29 1961.43,987.79 1963.86,987.79 C1966.29,987.79 1968.72,987.79 1971.15,987.79 C1973.58,987.79 1976.01,986.12 1978.44,985.79 C1980.87,985.46 1983.30,985.29 1985.73,985.29 C1988.16,985.29 1990.59,985.46 1993.02,985.79 C1995.45,986.12 1997.88,987.29 2000.31,987.29 C2002.74,987.29 2005.17,984.29 2007.60,984.29 C2010.03,984.29 2012.46,989.79 2014.89,989.79 C2017.32,989.79 2019.75,989.63 2022.18,989.29 C2024.61,988.96 2027.04,986.79 2029.47,986.79 C2031.90,986.79 2034.33,989.29 2036.76,989.29 C2039.19,989.29 2041.62,988.29 2044.05,988.29 C2046.48,988.29 2048.91,988.79 2051.34,988.79 C2053.77,988.79 2056.20,988.29 2058.62,988.29 C2061.05,988.29 2063.48,989.79 2065.91,989.79 C2068.34,989.79 2070.77,988.63 2073.20,988.29 C2075.63,987.96 2078.06,987.79 2080.49,987.79 C2082.92,987.79 2085.35,989.29 2087.78,989.29 C2090.21,989.29 2092.64,987.29 2095.07,987.29 C2097.50,987.29 2099.93,987.29 2102.36,987.29 C2104.79,987.29 2107.22,988.79 2109.65,988.79 C2112.08,988.79 2114.51,986.79 2116.94,986.79 C2119.37,986.79 2121.80,988.79 2124.23,988.79 C2126.66,988.79 2129.09,988.79 2131.52,988.79 C2133.95,988.79 2136.38,987.29 2138.81,987.29 C2141.24,987.29 2143.67,987.29 2146.10,987.29" fill="none" stroke="#23567e" stroke-width="3.2" stroke-linejoin="round" stroke-linecap="round"/></svg>
</body></html>
